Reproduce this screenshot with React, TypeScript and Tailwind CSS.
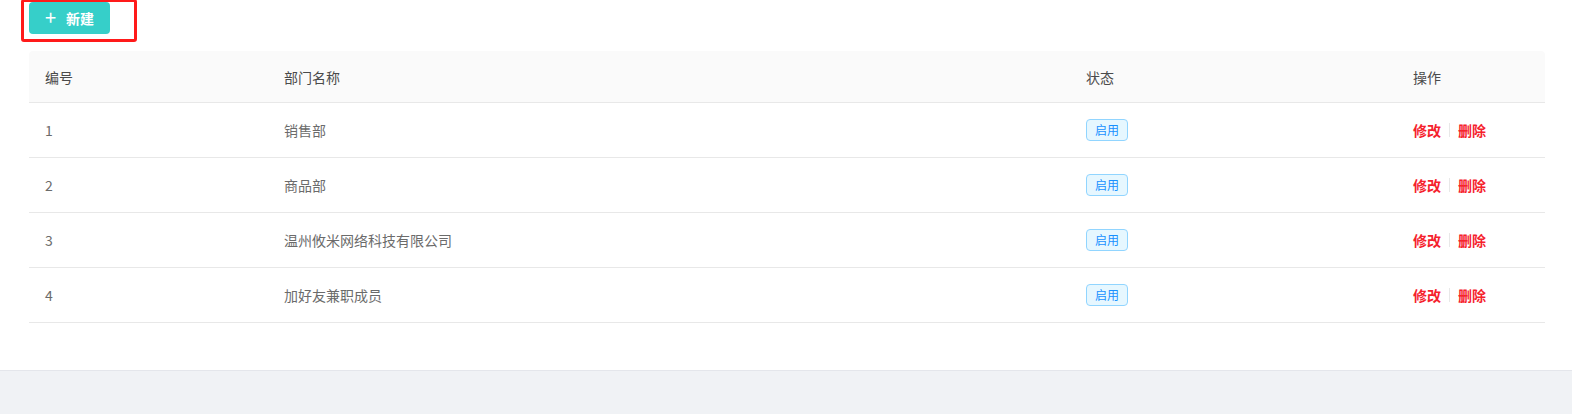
import React from 'react';

interface Departamento {
  id: number;
  nombre: string;
  estado: string;
}

const departamentos: Departamento[] = [
  { id: 1, nombre: '销售部', estado: '启用' },
  { id: 2, nombre: '商品部', estado: '启用' },
  { id: 3, nombre: '温州攸米网络科技有限公司', estado: '启用' },
  { id: 4, nombre: '加好友兼职成员', estado: '启用' },
];

const cols = 'grid grid-cols-[239px_802px_327px_1fr]';

const App: React.FC = () => {
  return (
    <div className="w-[1572px] h-[415px] bg-[#f0f2f5] font-['Noto_Sans_CJK_SC','Noto_Sans',sans-serif] text-sm">
      <div className="bg-white h-[372px] border-b border-[#e4e6eb] pl-[29px] pr-[27px]">
        {/* caja roja alrededor del boton */}
        <div className="-ml-[8px] -mt-px w-[116px] h-[43px] border-[3px] border-[#ff1a1a] rounded-[3px] pl-[5px] pt-0">
          <button className="flex items-center justify-center gap-[10px] w-[81px] h-[32px] bg-[#36cfc9] text-white rounded-[4px] font-semibold">
            <span className="text-[20px] leading-none font-normal -mt-[2px]">+</span>
            <span>新建</span>
          </button>
        </div>

        <div className="mt-[9px]">
          <div className={`${cols} h-[52px] items-center bg-[#fafafa] border-b border-[#e8e8e8] rounded-t-[4px] text-[#4a4a4a]`}>
            <div className="pl-4">编号</div>
            <div className="pl-4">部门名称</div>
            <div className="pl-4">状态</div>
            <div className="pl-4">操作</div>
          </div>
          {departamentos.map((d) => (
            <div key={d.id} className={`${cols} h-[55px] items-center border-b border-[#e8e8e8] text-[#6b6b6b]`}>
              <div className="pl-4">{d.id}</div>
              <div className="pl-4">{d.nombre}</div>
              <div className="pl-4">
                <span className="inline-block h-[22px] leading-[20px] px-[8px] text-xs text-[#1890ff] bg-[#e6f7ff] border border-[#91d5ff] rounded-[4px]">
                  {d.estado}
                </span>
              </div>
              <div className="pl-4 flex items-center text-[#f5222d] font-semibold">
                <span>修改</span>
                <span className="mx-2 w-px h-[14px] bg-[#e8e8e8]"></span>
                <span>删除</span>
              </div>
            </div>
          ))}
        </div>
      </div>
    </div>
  );
};

export default App;
